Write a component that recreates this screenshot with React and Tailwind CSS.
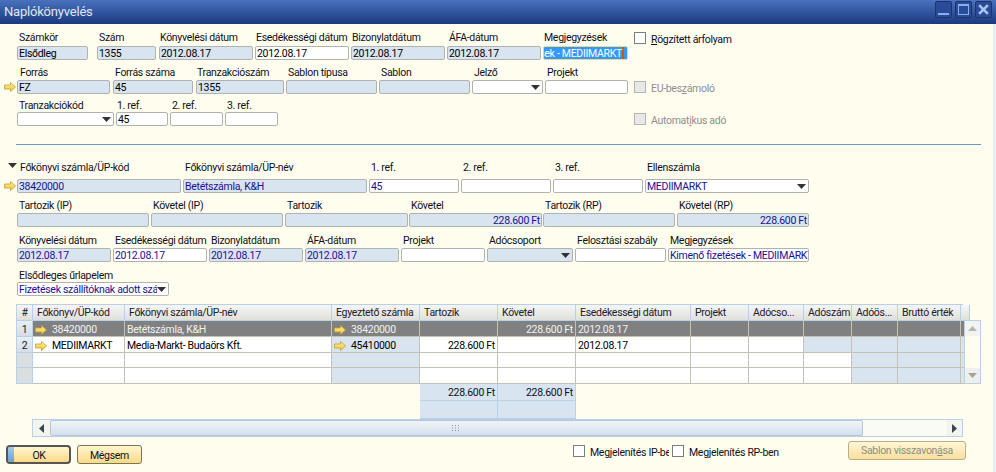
import React from "react";

const Arrow = () => (
  <svg width="12" height="10" viewBox="0 0 12 10" className="shrink-0">
    <defs>
      <linearGradient id="ag" x1="0" y1="0" x2="0" y2="1">
        <stop offset="0" stopColor="#fff3a0" />
        <stop offset="1" stopColor="#f0c030" />
      </linearGradient>
    </defs>
    <polygon points="0.5,3 6.5,3 6.5,0.5 11.5,5 6.5,9.5 6.5,7 0.5,7" fill="url(#ag)" stroke="#c0a030" strokeWidth="0.8" />
  </svg>
);

const Tri = ({ className = "" }) => (
  <svg width="9" height="5" viewBox="0 0 9 5" className={"shrink-0 self-center " + className}>
    <polygon points="0,0 9,0 4.5,5" fill="#333" />
  </svg>
);

const Box = ({ className, children }) => (
  <div className={"h-[14px] border border-[#b0b2b0] rounded-[2px] flex items-start overflow-hidden whitespace-nowrap px-[1px] leading-[14px] " + className}>
    {children}
  </div>
);

const Label = ({ className = "", children }) => (
  <div className={"h-[12px] leading-[14px] whitespace-nowrap text-[#10101a] " + className}>{children}</div>
);

const RO = "bg-[#d9e4f1]";
const WH = "bg-white";
const NAVY = "text-[#1c1090]";

const Check = ({ disabled, children, className = "" }) => (
  <div className={"flex items-center leading-[12px] " + className}>
    <div className={"w-[12px] h-[12px] border shrink-0 " + (disabled ? "border-[#b4b4b4] bg-[#e8e8e4]" : "border-[#7c7c7c] bg-white")} />
    <span className={"ml-[5px] whitespace-nowrap translate-y-[2px] " + (disabled ? "text-[#8e8e8e]" : "text-[#10101a]")}>{children}</span>
  </div>
);

const headCell = "h-[16px] pt-[1px] border-r border-b border-[#b8d0e8] bg-gradient-to-b from-[#f6f6f4] to-[#dfdfdc] flex items-center px-[4px] whitespace-nowrap overflow-hidden text-[#20202a]";

const headers = ["#", "Főkönyv/ÜP-kód", "Főkönyvi számla/ÜP-név", "Egyeztető számla", "Tartozik", "Követel", "Esedékességi dátum", "Projekt", "Adócso...", "Adószám", "Adóös...", "Bruttó érték", ""];

const GRID = "grid grid-cols-[16px_92px_207px_88px_78px_78px_115px_58px_55px_48px_46px_63px_3px]";

const Cell = ({ className = "", children }) => (
  <div className={"border-r border-b border-[#c4c2b4] flex items-center pl-[2px] pr-[2px] pt-[2px] whitespace-nowrap overflow-hidden " + className}>{children}</div>
);

const NumCell = ({ n, h }) => (
  <div className={h + " pt-[2px] border-r border-b border-[#b8d0e8] bg-gradient-to-b from-[#e8eef4] to-[#d4dde6] flex items-center justify-center text-[#20202a]"}>{n}</div>
);

const EmptyRow = ({ h }) => (
  <>
    <div className={h + " border-r border-b border-[#b8d0e8] bg-[#d9dedf]"} />
    <Cell className={h + " bg-white"} />
    <Cell className={h + " bg-white"} />
    <Cell className={h + " " + RO} />
    <Cell className={h + " bg-white"} />
    <Cell className={h + " bg-white"} />
    <Cell className={h + " bg-white"} />
    <Cell className={h + " bg-white"} />
    <Cell className={h + " bg-white"} />
    <Cell className={h + " bg-white"} />
    <Cell className={h + " " + RO} />
    <Cell className={h + " " + RO} />
    <Cell className={h + " " + RO} />
  </>
);

export default function App() {
  return (
    <div className="w-[996px] h-[472px] overflow-hidden flex flex-col bg-[#fffdee] text-[10.5px] tracking-[-0.3px] font-['Roboto',sans-serif]">
      <div className="h-[24px] shrink-0 flex items-start bg-gradient-to-b from-[#4a72bd] to-[#1a3a80] pl-[4px] pr-[4px]">
        <span className="text-[13px] leading-[24px] tracking-[-0.2px] text-[#dfe8f5]">Naplókönyvelés</span>
        <div className="ml-auto mt-[1px] flex gap-[3px]">
          <div className="w-[17px] h-[17px] rounded-[2px] border border-[#1c3468] bg-[#2a4c98] flex items-end justify-center pb-[2px]">
            <div className="w-[11px] h-[2px] bg-[#88aef0]" />
          </div>
          <div className="w-[17px] h-[17px] rounded-[2px] border border-[#1c3468] bg-[#2a4c98] flex items-center justify-center">
            <div className="w-[11px] h-[11px] border border-t-2 border-[#88aef0]" />
          </div>
          <div className="w-[17px] h-[17px] rounded-[2px] border border-[#1c3468] bg-[#2a4c98] flex items-center justify-center">
            <svg width="11" height="11" viewBox="0 0 10 10"><path d="M1 1L9 9M9 1L1 9" stroke="#a8c4f4" strokeWidth="2.4" /></svg>
          </div>
        </div>
      </div>

      <div className="flex-1 flex min-h-0">
        <div className="w-[993px] flex flex-col">
          {/* upper header */}
          <div className="flex">
            <div className="w-[628px] shrink-0 pt-[7px] pl-[4px] flex flex-col">
              <div className="flex pl-[13px]">
                <div className="w-[71px]"><Label className="pl-[2px] mb-[3px]">Számkör</Label><Box className={RO}>Elsődleg</Box></div>
                <div className="w-[59px] ml-[9px]"><Label className="pl-[2px] mb-[3px]">Szám</Label><Box className={RO}>1355</Box></div>
                <div className="w-[94px] ml-[3px]"><Label className="pl-[1px] mb-[3px]">Könyvelési dátum</Label><Box className={RO}>2012.08.17</Box></div>
                <div className="w-[94px] ml-[2px]"><Label className="pl-[1px] mb-[3px]">Esedékességi dátum</Label><Box className={WH}>2012.08.17</Box></div>
                <div className="w-[94px] ml-[2px]"><Label className="pl-[1px] mb-[3px]">Bizonylatdátum</Label><Box className={RO}>2012.08.17</Box></div>
                <div className="w-[94px] ml-[2px]"><Label className="pl-[2px] mb-[3px]">ÁFA-dátum</Label><Box className={RO}>2012.08.17</Box></div>
                <div className="w-[85px] ml-[2px]">
                  <Label className="pl-[1px] mb-[3px]">Megjegyzések</Label>
                  <div className="h-[14px] border border-[#f0d880] rounded-[2px] bg-[#3399ff] flex justify-end overflow-hidden whitespace-nowrap text-white leading-[14px] pr-[3px]">
                    <span className="border-r-2 border-[#c85a10] h-[12px]">Kimenő fizetések - MEDIIMARKT</span>
                  </div>
                </div>
              </div>

              <div className="flex items-end mt-[6px]">
                <div className="w-[13px] h-[14px] flex items-center"><Arrow /></div>
                <div className="w-[93px]"><Label className="pl-[3px] mb-[2px]">Forrás</Label><Box className={RO}>FZ</Box></div>
                <div className="w-[80px] ml-[3px]"><Label className="pl-[2px] mb-[2px]">Forrás száma</Label><Box className={RO}>45</Box></div>
                <div className="w-[88px] ml-[3px]"><Label className="pl-[1px] mb-[2px]">Tranzakciószám</Label><Box className={RO}>1355</Box></div>
                <div className="w-[91px] ml-[2px]"><Label className="pl-[2px] mb-[2px]">Sablon típusa</Label><Box className={RO} /></div>
                <div className="w-[91px] ml-[2px]"><Label className="pl-[2px] mb-[2px]">Sablon</Label><Box className={RO} /></div>
                <div className="w-[71px] ml-[2px]"><Label className="pl-[2px] mb-[2px]">Jelző</Label><Box className={WH + " justify-end pr-[2px]"}><Tri /></Box></div>
                <div className="w-[83px] ml-[2px]"><Label className="pl-[2px] mb-[2px]">Projekt</Label><Box className={WH} /></div>
              </div>

              <div className="flex mt-[5px] pl-[13px]">
                <div className="w-[97px]"><Label className="pl-[2px] mb-[1px]">Tranzakciókód</Label><Box className={WH + " justify-end pr-[2px]"}><Tri /></Box></div>
                <div className="w-[52px] ml-[2px]"><Label className="pl-[1px] mb-[1px]">1. ref.</Label><Box className={WH}>45</Box></div>
                <div className="w-[53px] ml-[2px]"><Label className="pl-[2px] mb-[1px]">2. ref.</Label><Box className={WH} /></div>
                <div className="w-[53px] ml-[2px]"><Label className="pl-[2px] mb-[1px]">3. ref.</Label><Box className={WH} /></div>
              </div>
            </div>

            <div className="ml-[6px] flex flex-col">
              <Check className="mt-[8px]"><u>R</u>ögzített árfolyam</Check>
              <Check disabled className="mt-[37px]">EU-bes<u>z</u>ámoló</Check>
              <Check disabled className="mt-[20px]">Automat<u>i</u>kus adó</Check>
            </div>
          </div>

          <div className="h-px ml-[16px] w-[965px] bg-[#6f95c4] mt-[18px] shrink-0" />

          {/* line section */}
          <div className={"flex flex-col pl-[4px] " + NAVY}>
            <div className="flex items-end mt-[16px]">
              <div className="w-[13px] relative h-[14px] flex items-center">
                <Arrow />
                <div className="absolute left-[4px] -top-[16px]"><Tri /></div>
              </div>
              <div className="w-[164px]"><Label className="pl-[3px] mb-[6px]">Főkönyvi számla/ÜP-kód</Label><Box className={RO}>38420000</Box></div>
              <div className="w-[184px] ml-[2px]"><Label className="pl-[2px] mb-[6px]">Főkönyvi számla/ÜP-név</Label><Box className={RO}>Betétszámla, K&amp;H</Box></div>
              <div className="w-[90px] ml-[2px]"><Label className="pl-[2px] mb-[6px]">1. ref.</Label><Box className={WH}>45</Box></div>
              <div className="w-[90px] ml-[2px]"><Label className="pl-[2px] mb-[6px]">2. ref.</Label><Box className={WH} /></div>
              <div className="w-[90px] ml-[2px]"><Label className="pl-[2px] mb-[6px]">3. ref.</Label><Box className={WH} /></div>
              <div className="w-[164px] ml-[2px]"><Label className="pl-[2px] mb-[6px]">Ellenszámla</Label><Box className={WH + " justify-between pr-[2px]"}><span>MEDIIMARKT</span><Tri /></Box></div>
            </div>

            <div className="flex mt-[6px] pl-[13px]">
              <div className="w-[132px]"><Label className="pl-[2px] mb-[2px]">Tartozik (IP)</Label><Box className={RO} /></div>
              <div className="w-[132px] ml-[2px]"><Label className="pl-[2px] mb-[2px]">Követel (IP)</Label><Box className={RO} /></div>
              <div className="w-[123px] ml-[2px]"><Label className="pl-[2px] mb-[2px]">Tartozik</Label><Box className={RO} /></div>
              <div className="w-[133px] ml-[1px]"><Label className="pl-[2px] mb-[2px]">Követel</Label><Box className={RO + " justify-end"}>228.600 Ft</Box></div>
              <div className="w-[132px] ml-[1px]"><Label className="pl-[2px] mb-[2px]">Tartozik (RP)</Label><Box className={RO} /></div>
              <div className="w-[132px] ml-[2px]"><Label className="pl-[2px] mb-[2px]">Követel (RP)</Label><Box className={RO + " justify-end"}>228.600 Ft</Box></div>
            </div>

            <div className="flex mt-[7px] pl-[13px]">
              <div className="w-[94px]"><Label className="pl-[2px] mb-[2px]">Könyvelési dátum</Label><Box className={RO}>2012.08.17</Box></div>
              <div className="w-[94px] ml-[2px]"><Label className="pl-[2px] mb-[2px]">Esedékességi dátum</Label><Box className={WH}>2012.08.17</Box></div>
              <div className="w-[94px] ml-[2px]"><Label className="pl-[2px] mb-[2px]">Bizonylatdátum</Label><Box className={RO}>2012.08.17</Box></div>
              <div className="w-[94px] ml-[2px]"><Label className="pl-[2px] mb-[2px]">ÁFA-dátum</Label><Box className={RO}>2012.08.17</Box></div>
              <div className="w-[84px] ml-[2px]"><Label className="pl-[2px] mb-[2px]">Projekt</Label><Box className={WH} /></div>
              <div className="w-[86px] ml-[2px]"><Label className="pl-[2px] mb-[2px]">Adócsoport</Label><Box className={RO + " justify-end pr-[2px]"}><Tri /></Box></div>
              <div className="w-[91px] ml-[2px]"><Label className="pl-[2px] mb-[2px]">Felosztási szabály</Label><Box className={WH} /></div>
              <div className="w-[141px] ml-[2px]"><Label className="pl-[2px] mb-[2px]">Megjegyzések</Label><Box className={WH}>Kimenő fizetések - MEDIIMARKT</Box></div>
            </div>

            <div className="flex mt-[7px] pl-[13px]">
              <div className="w-[152px]">
                <Label className="pl-[2px] mb-[1px]">Elsődleges űrlapelem</Label>
                <Box className={WH + " justify-between pr-[2px]"}><span className="overflow-hidden">Fizetések szállítóknak adott szár</span><Tri /></Box>
              </div>
            </div>
          </div>

          {/* grid */}
          <div className="flex items-end mt-[8px] pl-[16px]">
            <div className={GRID + " border-l border-t border-[#b8d0e8] w-[947px] shrink-0"}>
              {headers.map((h, i) => (
                <div key={i} className={headCell + (i === 0 ? " justify-center" : "")}>{h}</div>
              ))}

              <NumCell n="1" h="h-[16px]" />
              <Cell className="h-[16px] bg-[#808080] text-[#f2f2f2]"><Arrow /><span className="ml-[5px]">38420000</span></Cell>
              <Cell className="h-[16px] bg-[#808080] text-[#f2f2f2]">Betétszámla, K&amp;H</Cell>
              <Cell className="h-[16px] bg-[#808080] text-[#f2f2f2]"><Arrow /><span className="ml-[5px]">38420000</span></Cell>
              <Cell className="h-[16px] bg-[#808080]" />
              <Cell className="h-[16px] bg-[#808080] text-[#f2f2f2] justify-end">228.600 Ft</Cell>
              <Cell className="h-[16px] bg-[#808080] text-[#f2f2f2]">2012.08.17</Cell>
              <Cell className="h-[16px] bg-[#808080]" />
              <Cell className="h-[16px] bg-[#808080]" />
              <Cell className="h-[16px] bg-[#808080]" />
              <Cell className="h-[16px] bg-[#808080]" />
              <Cell className="h-[16px] bg-[#808080]" />
              <Cell className="h-[16px] bg-[#808080]" />

              <NumCell n="2" h="h-[16px]" />
              <Cell className="h-[16px] bg-white text-black"><Arrow /><span className="ml-[5px]">MEDIIMARKT</span></Cell>
              <Cell className="h-[16px] bg-white text-black">Media-Markt- Budaörs Kft.</Cell>
              <Cell className={"h-[16px] text-black " + RO}><Arrow /><span className="ml-[5px]">45410000</span></Cell>
              <Cell className="h-[16px] bg-white text-black justify-end">228.600 Ft</Cell>
              <Cell className="h-[16px] bg-white" />
              <Cell className="h-[16px] bg-white text-black">2012.08.17</Cell>
              <Cell className="h-[16px] bg-white" />
              <Cell className="h-[16px] bg-white" />
              <Cell className={"h-[16px] " + RO} />
              <Cell className={"h-[16px] " + RO} />
              <Cell className={"h-[16px] " + RO} />
              <Cell className={"h-[16px] " + RO} />

              <EmptyRow h="h-[15px]" />
              <EmptyRow h="h-[16px]" />
            </div>
            <div className="w-[17px] h-[64px] ml-px border border-[#b8d0e8] flex flex-col justify-between bg-[#fffdf2]">
              <div className="h-[15px] bg-[#f4f4ef] flex items-center justify-center">
                <svg width="9" height="5" viewBox="0 0 9 5"><polygon points="0,5 9,5 4.5,0" fill="#b0b8bc" /></svg>
              </div>
              <div className="h-[15px] bg-[#f0f0ea] flex items-center justify-center">
                <Tri className="opacity-40" />
              </div>
            </div>
          </div>

          {/* totals */}
          <div className="ml-[420px] flex flex-col w-[156px] shrink-0 text-[#10101a]">
            <div className="flex h-[17px]">
              <div className={"w-[78px] border-r border-b border-[#b8d0e8] flex items-center justify-end pr-[2px] pt-[2px] " + RO}>228.600 Ft</div>
              <div className={"w-[78px] border-r border-b border-[#b8d0e8] flex items-center justify-end pr-[2px] pt-[2px] " + RO}>228.600 Ft</div>
            </div>
            <div className="flex h-[18px]">
              <div className={"w-[78px] border-r border-b border-[#b8d0e8] " + RO} />
              <div className={"w-[78px] border-r border-b border-[#b8d0e8] " + RO} />
            </div>
          </div>

          {/* horizontal scrollbar */}
          <div className="ml-[32px] w-[931px] h-[18px] shrink-0 border border-[#b8d0e8] flex bg-[#fbfbf5]">
            <div className="w-[17px] flex items-center justify-center bg-[#f4f4ef]">
              <svg width="5" height="9" viewBox="0 0 5 9"><polygon points="5,0 5,9 0,4.5" fill="#3a4450" /></svg>
            </div>
            <div className="w-[813px] border border-[#b4c6da] rounded-[2px] bg-gradient-to-b from-[#f0f4f8] to-[#d4e0ec] flex items-center justify-end pr-[402px]">
              <svg width="8" height="6" viewBox="0 0 8 6">
                <path d="M0 0h1v1H0zM3 0h1v1H3zM6 0h1v1H6zM0 2.5h1v1H0zM3 2.5h1v1H3zM6 2.5h1v1H6zM0 5h1v1H0zM3 5h1v1H3zM6 5h1v1H6z" fill="#8c9aa8" />
              </svg>
            </div>
            <div className="ml-auto w-[15px] flex items-center justify-center bg-[#f4f4ef]">
              <svg width="5" height="9" viewBox="0 0 5 9"><polygon points="0,0 0,9 5,4.5" fill="#3a4450" /></svg>
            </div>
          </div>

          {/* footer */}
          <div className="flex items-start mt-[4px] pl-[6px] text-[#10101a]">
            <div className="mt-[4px] w-[65px] h-[19px] border-2 border-[#555] rounded-[4px] bg-gradient-to-b from-[#fff6cf] to-[#fbd987] flex overflow-hidden">
              <div className="w-[6px] bg-gradient-to-b from-[#a8c8f0] to-[#6f9cdc]" />
              <div className="flex-1 flex items-center justify-center pr-[5px] pt-[2px]">OK</div>
            </div>
            <div className="mt-[4px] ml-[6px] w-[65px] h-[19px] border border-[#7a7452] rounded-[3px] bg-gradient-to-b from-[#fff6cf] to-[#fbd987] flex items-center justify-center pt-[2px]">Mégsem</div>
            <div className="mt-[4px] ml-[431px] w-[96px] h-[16px] overflow-hidden">
              <Check>Me<u>g</u>jelenítés IP-ben</Check>
            </div>
            <Check className="mt-[4px] ml-[3px] w-[176px]">Me<u>g</u>jelenítés RP-ben</Check>
            <div className="w-[118px] h-[19px] border border-[#b8b088] rounded-[3px] bg-gradient-to-b from-[#fff6d8] to-[#fbdf9c] flex items-center justify-center text-[#8e8e80] pt-[1px]">
              <span>Sablon visszavon<u>á</u>sa</span>
            </div>
          </div>
        </div>
        <div className="w-[3px] bg-[#e8eef5]" />
      </div>
    </div>
  );
}
